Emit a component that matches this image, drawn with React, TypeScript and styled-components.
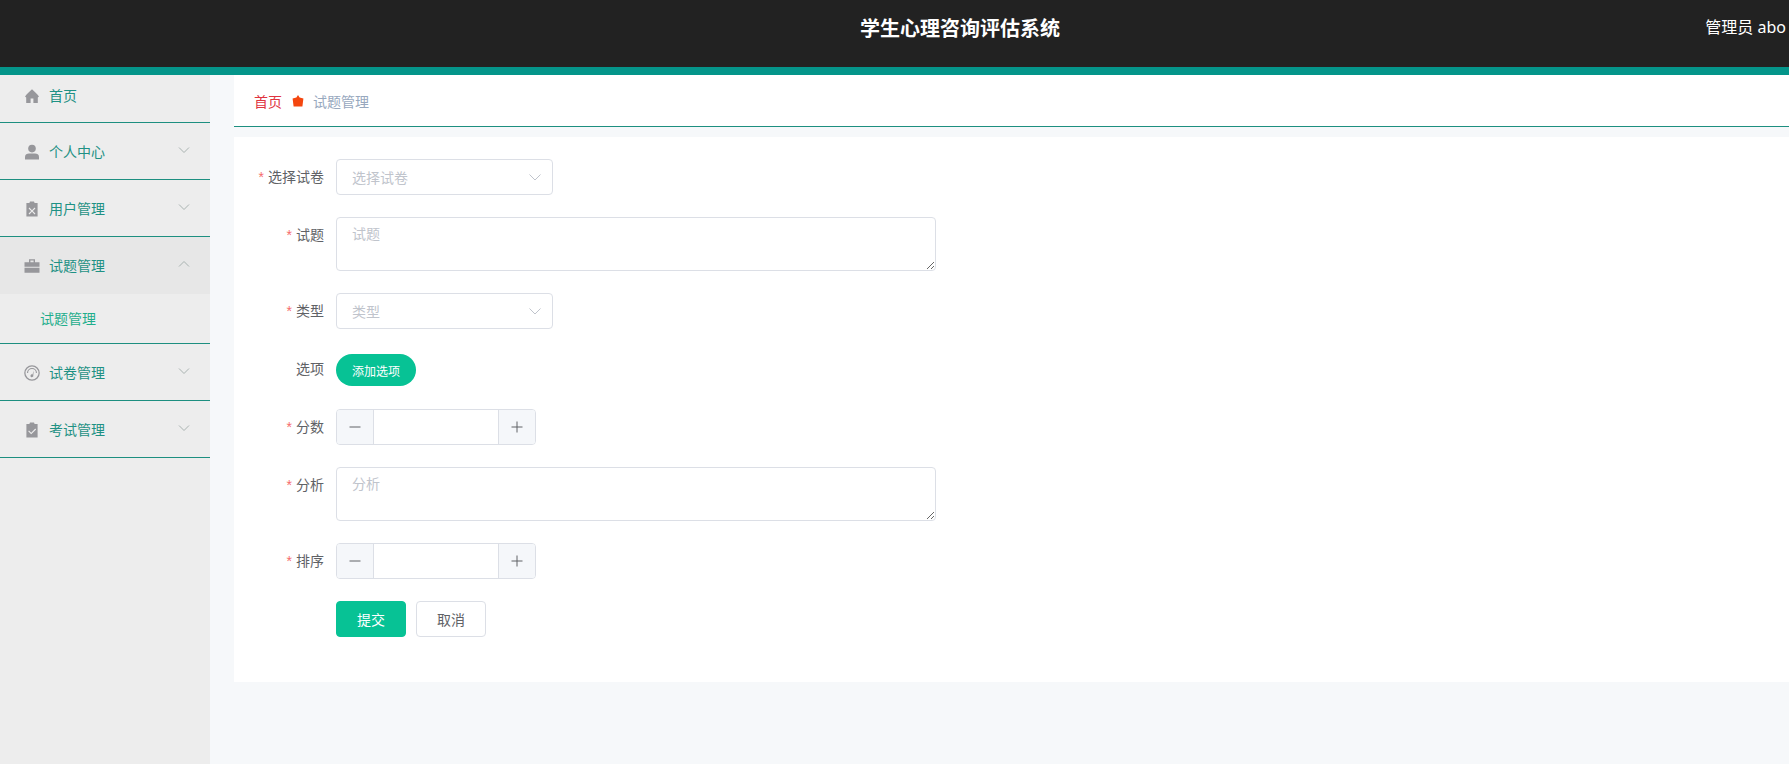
import React from "react";
import styled, { createGlobalStyle } from "styled-components";

const Global = createGlobalStyle`
  html, body { margin: 0; padding: 0; height: 100%; overflow: hidden; background: #f6f8fa; }
  * { box-sizing: border-box; }
  body { font-family: "Liberation Sans", "Noto Sans CJK SC", sans-serif; }
  textarea::placeholder, input::placeholder { color: #c0c4cc; }
`;

const Page = styled.div`
  width: 1789px;
  height: 764px;
  display: flex;
  flex-direction: column;
  overflow: hidden;
`;

const Header = styled.header`
  height: 75px;
  flex: none;
  background: #222222;
  border-bottom: 8px solid #04958a;
  display: flex;
  align-items: center;
  padding: 0 3px 10px 860px;
  color: #fff;
`;

const Title = styled.div`
  font-size: 20px;
  font-weight: 700;
  line-height: 28px;
`;

const User = styled.div`
  margin: 0 0 3px auto;
  font-family: "Noto Sans", "Noto Sans CJK SC", sans-serif;
  font-size: 16px;
  line-height: 24px;
`;

const Body = styled.div`
  flex: 1;
  display: flex;
  min-height: 0;
`;

const Sidebar = styled.aside`
  width: 210px;
  flex: none;
  background: #ededed;
`;

const MenuRow = styled.div<{ $active?: boolean; $first?: boolean }>`
  height: ${(p) => (p.$first ? 48 : 57)}px;
  display: flex;
  align-items: center;
  padding: ${(p) => (p.$first ? "0 20px 6px 24px" : p.$active ? "0 20px 0 24px" : "2px 20px 0 24px")};
  background: ${(p) => (p.$active ? "#e7e7e7" : "transparent")};
  border-bottom: ${(p) => (p.$active ? "none" : "1px solid #1d8f80")};
  color: #1e9184;
  font-size: 14px;
`;

const MenuIcon = styled.svg`
  width: 16px;
  height: 16px;
  flex: none;
  margin-right: 9px;
  fill: #97979b;
`;

const MenuLabel = styled.span`
  flex: 1;
  line-height: 20px;
`;

const Chevron = styled.svg`
  width: 12px;
  height: 12px;
  flex: none;
  margin: -4px 0 0 0;
  fill: none;
  stroke: #a9b3b1;
  stroke-width: 1;
`;

const SubRow = styled.div`
  height: 50px;
  display: flex;
  align-items: center;
  padding: 0 0 2px 40px;
  border-bottom: 1px solid #1d8f80;
  color: #1fae8c;
  font-size: 14px;
`;

const Main = styled.main`
  flex: 1;
  min-width: 0;
  padding-left: 24px;
`;

const Crumbs = styled.nav`
  height: 52px;
  background: #fff;
  border-bottom: 1px solid #1d8f80;
  display: flex;
  align-items: center;
  padding: 0 0 0 20px;
  font-size: 14px;
  margin-bottom: 10px;
`;

const CrumbHome = styled.span`
  color: #e0343f;
`;

const CrumbIcon = styled.svg`
  width: 12px;
  height: 12px;
  margin: 0 9px 0 10px;
  fill: #f4460f;
`;

const CrumbCurrent = styled.span`
  color: #97a8be;
`;

const FormCard = styled.form`
  height: 545px;
  background: #fff;
  padding: 22px 0 0 0;
  display: flex;
  flex-direction: column;
  gap: 22px;
`;

const Field = styled.div`
  display: flex;
  align-items: flex-start;
`;

const Label = styled.label<{ $required?: boolean }>`
  width: 102px;
  flex: none;
  text-align: right;
  padding-right: 12px;
  line-height: 36px;
  font-size: 14px;
  color: #606266;
  white-space: nowrap;
  &::before {
    content: ${(p) => (p.$required ? '"*"' : '""')};
    color: #f56c6c;
    margin-right: 4px;
  }
`;

const SelectBox = styled.div`
  width: 217px;
  height: 36px;
  border: 1px solid #dcdfe6;
  border-radius: 4px;
  background: #fff;
  display: flex;
  align-items: center;
  justify-content: space-between;
  padding: 0 10px 0 15px;
  font-size: 14px;
  color: #c0c4cc;
`;

const SelectArrow = styled.svg`
  width: 14px;
  height: 14px;
  fill: none;
  stroke: #c0c4cc;
  stroke-width: 1;
`;

const TextArea = styled.textarea`
  width: 600px;
  height: 54px;
  border: 1px solid #dcdfe6;
  border-radius: 4px;
  padding: 6px 15px;
  font-family: inherit;
  font-size: 14px;
  line-height: 20px;
  color: #606266;
  display: block;
  background: #fff;
  outline: none;
`;

const PillButton = styled.button`
  width: 80px;
  height: 32px;
  margin: 3px 0 1px;
  border: none;
  border-radius: 16px;
  background: #07c295;
  color: #fff;
  font-family: inherit;
  font-size: 12px;
  padding: 0;
`;

const NumberBox = styled.div`
  width: 200px;
  height: 36px;
  border: 1px solid #dcdfe6;
  border-radius: 4px;
  display: flex;
  background: #fff;
`;

const Stepper = styled.div<{ $side: "left" | "right" }>`
  width: 37px;
  flex: none;
  background: #f5f7fa;
  display: flex;
  align-items: center;
  justify-content: center;
  ${(p) =>
    p.$side === "left"
      ? "border-right: 1px solid #dcdfe6; border-radius: 3px 0 0 3px;"
      : "border-left: 1px solid #dcdfe6; border-radius: 0 3px 3px 0;"}
`;

const StepIcon = styled.svg`
  width: 14px;
  height: 14px;
  fill: none;
  stroke: #606266;
  stroke-width: 1;
`;

const NumberInput = styled.input`
  flex: 1;
  min-width: 0;
  border: none;
  outline: none;
  background: transparent;
`;

const Actions = styled.div`
  display: flex;
  gap: 10px;
  padding-left: 102px;
`;

const ActionButton = styled.button<{ $primary?: boolean }>`
  width: 70px;
  height: 36px;
  border-radius: 4px;
  border: 1px solid ${(p) => (p.$primary ? "#07c295" : "#dcdfe6")};
  background: ${(p) => (p.$primary ? "#07c295" : "#fff")};
  color: ${(p) => (p.$primary ? "#fff" : "#606266")};
  font-family: inherit;
  font-size: 14px;
  padding: 0;
`;

const icons: Record<string, React.ReactNode> = {
  home: <path d="M8 1.2C5.5 3.4 3 5.8 1 8.6l1.2.8V15h4.4v-4.4h2.8V15h4.4V9.4l1.2-.8C13 5.8 10.5 3.4 8 1.2z" />,
  user: (
    <>
      <circle cx="8" cy="4.6" r="3.8" />
      <path d="M1 15.4v-2.6C1 10.6 3 9.6 5 9.6h6c2 0 4 1 4 3.2v2.6z" />
    </>
  ),
  clip: (
    <path
      fillRule="evenodd"
      d="M6 0.4h4l.6 1.6h3v13.6H2.4V2h3zM5.4 6.6l-.8.8L7.2 10l-2.6 2.6.8.8L8 10.8l2.6 2.6.8-.8L8.8 10l2.6-2.6-.8-.8L8 9.2z"
    />
  ),
  case: (
    <path
      fillRule="evenodd"
      d="M5 1.2h6v3h4.5v4.6H.5V4.2H5zM6.4 2.6v1.6h3.2V2.6zM.5 9.8h15v5H.5z"
    />
  ),
  gauge: (
    <path
      fillRule="evenodd"
      d="M8 0.2a7.8 7.8 0 1 0 0 15.6A7.8 7.8 0 0 0 8 .2zm0 1.3a6.5 6.5 0 1 1 0 13 6.5 6.5 0 0 1 0-13zM8 3a5 5 0 0 0-5 5h1.1A3.9 3.9 0 0 1 8 4.1 3.9 3.9 0 0 1 11.9 8H13a5 5 0 0 0-5-5zM9.7 5.4 8.5 9.4a1.5 1.5 0 1 0-1.1 2.8 1.5 1.5 0 0 0 1.9-1.8z"
    />
  ),
  check: (
    <path
      fillRule="evenodd"
      d="M6 0.4h4l.6 1.6h3v13.6H2.4V2h3zM11.3 6.6 7.2 10.7 5 8.5l-.8.8 3 3 4.9-4.9z"
    />
  ),
};

const MenuGlyph = ({ name }: { name: string }) => (
  <MenuIcon viewBox="0 0 16 16">{icons[name]}</MenuIcon>
);

const Down = () => (
  <Chevron viewBox="0 0 12 12">
    <path d="M1 3.5 6 8.5 11 3.5" />
  </Chevron>
);

const Up = () => (
  <Chevron viewBox="0 0 12 12">
    <path d="M1 8.5 6 3.5 11 8.5" />
  </Chevron>
);

const Select = ({ text }: { text: string }) => (
  <SelectBox>
    {text}
    <SelectArrow viewBox="0 0 14 14">
      <path d="M1.5 4.5 7 10 12.5 4.5" />
    </SelectArrow>
  </SelectBox>
);

const NumberField = () => (
  <NumberBox>
    <Stepper $side="left">
      <StepIcon viewBox="0 0 14 14">
        <path d="M1.5 7h11" />
      </StepIcon>
    </Stepper>
    <NumberInput aria-label="number" />
    <Stepper $side="right">
      <StepIcon viewBox="0 0 14 14">
        <path d="M1.5 7h11M7 1.5v11" />
      </StepIcon>
    </Stepper>
  </NumberBox>
);

export default function App() {
  return (
    <Page>
      <Global />
      <Header>
        <Title>学生心理咨询评估系统</Title>
        <User>管理员 abo</User>
      </Header>
      <Body>
        <Sidebar>
          <MenuRow $first>
            <MenuGlyph name="home" />
            <MenuLabel>首页</MenuLabel>
          </MenuRow>
          <MenuRow>
            <MenuGlyph name="user" />
            <MenuLabel>个人中心</MenuLabel>
            <Down />
          </MenuRow>
          <MenuRow>
            <MenuGlyph name="clip" />
            <MenuLabel>用户管理</MenuLabel>
            <Down />
          </MenuRow>
          <MenuRow $active>
            <MenuGlyph name="case" />
            <MenuLabel>试题管理</MenuLabel>
            <Up />
          </MenuRow>
          <SubRow>试题管理</SubRow>
          <MenuRow>
            <MenuGlyph name="gauge" />
            <MenuLabel>试卷管理</MenuLabel>
            <Down />
          </MenuRow>
          <MenuRow>
            <MenuGlyph name="check" />
            <MenuLabel>考试管理</MenuLabel>
            <Down />
          </MenuRow>
        </Sidebar>
        <Main>
          <Crumbs>
            <CrumbHome>首页</CrumbHome>
            <CrumbIcon viewBox="0 0 12 12">
              <path d="M6 0 7.6 2.6 11.4 3.4 10.4 11.6H1.6L.6 3.4 4.4 2.6z" />
            </CrumbIcon>
            <CrumbCurrent>试题管理</CrumbCurrent>
          </Crumbs>
          <FormCard>
            <Field>
              <Label $required>选择试卷</Label>
              <Select text="选择试卷" />
            </Field>
            <Field>
              <Label $required>试题</Label>
              <TextArea placeholder="试题" />
            </Field>
            <Field>
              <Label $required>类型</Label>
              <Select text="类型" />
            </Field>
            <Field>
              <Label>选项</Label>
              <PillButton type="button">添加选项</PillButton>
            </Field>
            <Field>
              <Label $required>分数</Label>
              <NumberField />
            </Field>
            <Field>
              <Label $required>分析</Label>
              <TextArea placeholder="分析" />
            </Field>
            <Field>
              <Label $required>排序</Label>
              <NumberField />
            </Field>
            <Actions>
              <ActionButton type="button" $primary>提交</ActionButton>
              <ActionButton type="button">取消</ActionButton>
            </Actions>
          </FormCard>
        </Main>
      </Body>
    </Page>
  );
}
